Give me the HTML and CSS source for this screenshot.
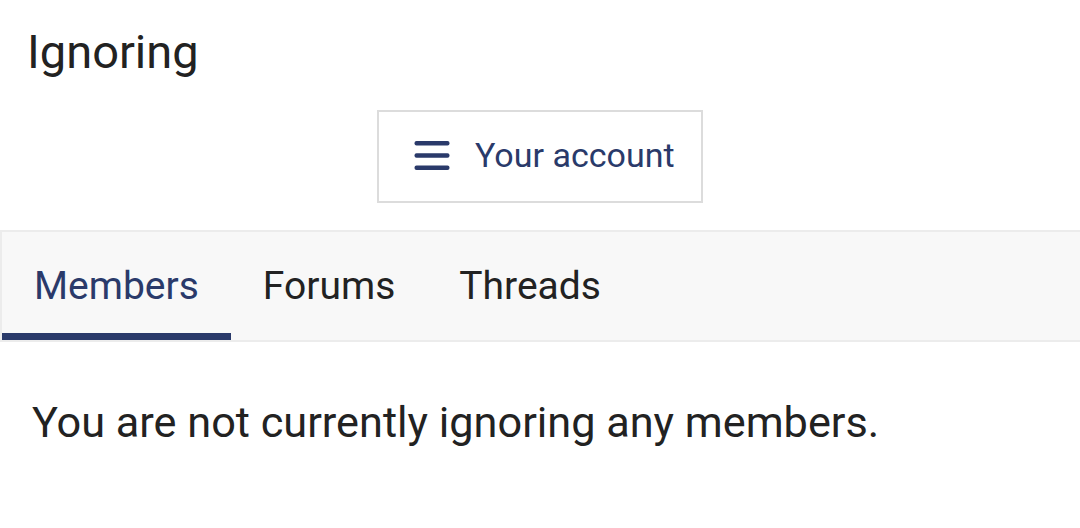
FILE: index.html
```html
<!DOCTYPE html>
<html lang="en">
<head>
<meta charset="utf-8">
<title>Ignoring</title>
<link rel="stylesheet" href="styles.css">
</head>
<body>
<div class="page">
  <h1 class="title">Ignoring</h1>
  <div class="account-row">
    <button class="account-btn" type="button">
      <svg class="menu-icon" width="36" height="32" viewBox="0 0 36 32" aria-hidden="true">
        <rect x="0.5" y="2" width="35" height="4.4" rx="2"/>
        <rect x="0.5" y="14.3" width="35" height="4.4" rx="2"/>
        <rect x="0.5" y="26.6" width="35" height="4.4" rx="2"/>
      </svg>
      <span class="account-label">Your account</span>
    </button>
  </div>
  <nav class="tabs">
    <a class="tab is-active" href="#">Members</a>
    <a class="tab" href="#">Forums</a>
    <a class="tab" href="#">Threads</a>
  </nav>
  <p class="message">You are not currently ignoring any members.</p>
</div>
</body>
</html>
```

FILE: styles.css
```css
html, body {
  margin: 0;
  padding: 0;
  background: #ffffff;
}

body {
  font-family: Roboto, "Noto Sans", "Liberation Sans", sans-serif;
  color: #212121;
}

.page {
  width: 1080px;
}

.title {
  margin: 0;
  padding: 22px 24px 0 27px;
  font-size: 47px;
  font-weight: 400;
  line-height: 60px;
  color: #222222;
}

.account-row {
  display: flex;
  justify-content: center;
  padding-top: 28px;
}

.account-btn {
  display: flex;
  align-items: center;
  gap: 25px;
  width: 326px;
  height: 93px;
  box-sizing: border-box;
  padding: 0 20px 4px 35px;
  background: #ffffff;
  border: 2px solid #dcdcdc;
  border-radius: 0;
  font-family: inherit;
  cursor: pointer;
}

.menu-icon {
  flex: none;
  fill: #2a3a6a;
}

.account-label {
  font-size: 34px;
  color: #2a3a6a;
  white-space: nowrap;
}

.tabs {
  display: flex;
  margin-top: 27px;
  height: 112px;
  box-sizing: border-box;
  background: #f8f8f8;
  border-top: 2px solid #ececec;
  border-bottom: 2px solid #ececec;
  border-left: 2px solid #ececec;
}

.tab {
  display: flex;
  align-items: center;
  padding: 7px 32px 0 32px;
  font-size: 39px;
  color: #222222;
  text-decoration: none;
  border-bottom: 7px solid transparent;
}

.tab.is-active {
  color: #2a3a6a;
  border-bottom-color: #2a3a6a;
}

.message {
  margin: 0;
  padding: 54px 32px 0 32px;
  font-size: 43.25px;
  line-height: 54px;
  color: #222222;
}
```
